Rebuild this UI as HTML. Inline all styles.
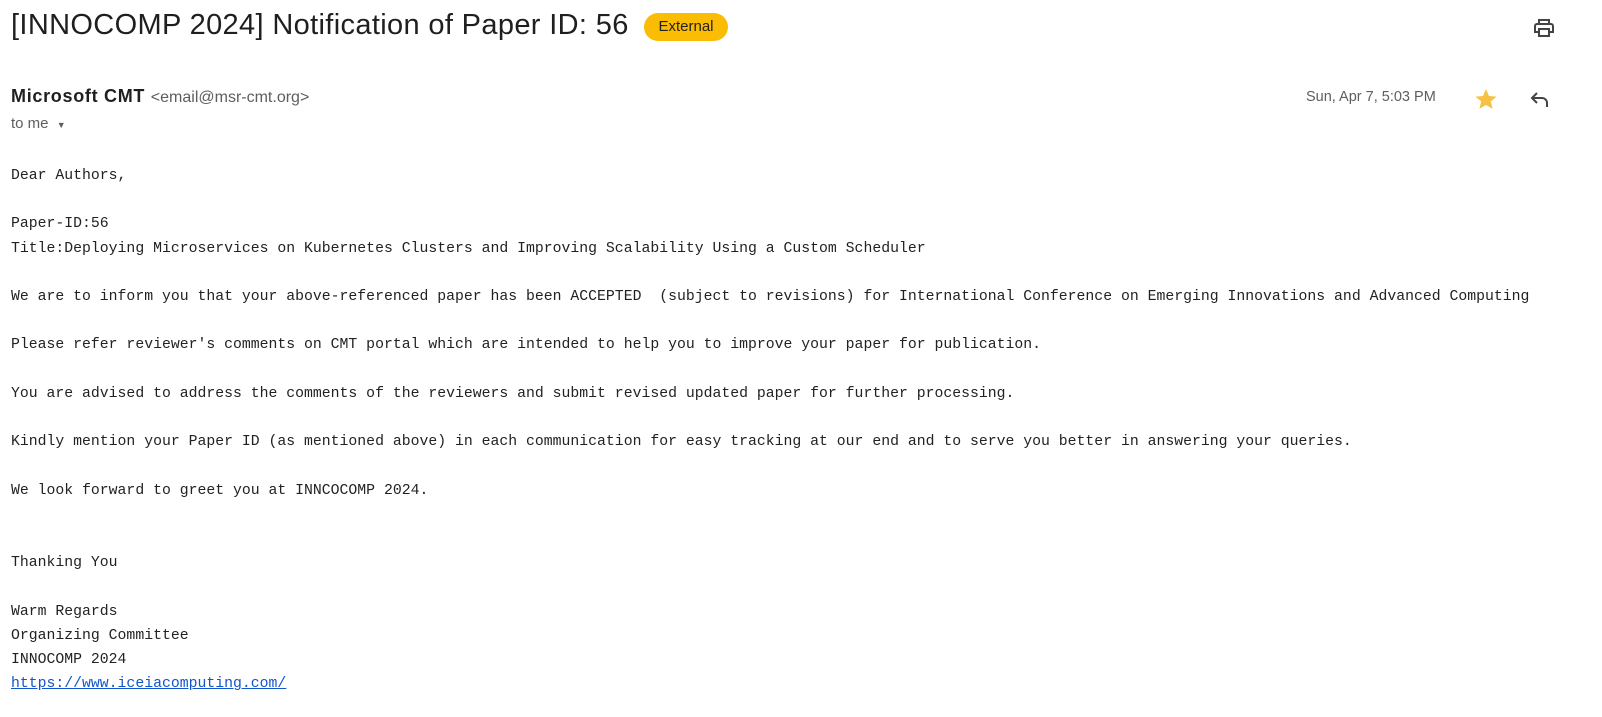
<!DOCTYPE html>
<html><head><style>
body{margin:0;background:#fff;width:1602px;height:717px;overflow:hidden;position:relative;font-family:"Liberation Sans",sans-serif;color:#1f1f1f}
.t{position:absolute;left:11px;top:9px;font-size:29px;white-space:nowrap;letter-spacing:0.35px}
.badge{position:absolute;left:644px;top:13px;width:84px;height:28px;border-radius:14px;background:#fbbc04;font-size:15px;line-height:28px;text-align:center;color:#222}
.from{position:absolute;left:11px;top:86px;font-size:18px;font-weight:bold;white-space:nowrap;letter-spacing:0.7px}
.from span{font-weight:normal;font-size:16px;color:#5e5e5e;letter-spacing:0}
.to{position:absolute;left:11px;top:115px;font-size:15px;color:#5e5e5e}
.date{position:absolute;left:1306px;top:89px;font-size:14.5px;color:#5e5e5e}
pre{position:absolute;left:11px;top:164px;margin:0;font-family:"Liberation Mono",monospace;font-size:14.8px;line-height:24.2px;color:#222}
a{color:#1155cc;text-decoration:underline}
</style></head><body>
<div class="t">[INNOCOMP 2024] Notification of Paper ID: 56</div>
<div class="badge">External</div>
<svg style="position:absolute;left:1532px;top:16px" width="24" height="24" viewBox="0 0 24 24"><path d="M7 8V4h10v4M5 8h14a2 2 0 0 1 2 2v6h-4M7 16H3v-6a2 2 0 0 1 2-2M7 13h10v7H7z" fill="none" stroke="#444" stroke-width="2"/></svg>
<div class="from">Microsoft CMT <span>&lt;email@msr-cmt.org&gt;</span></div>
<div class="to">to me <span style="font-size:9px;margin-left:4px">▼</span></div>
<div class="date">Sun, Apr 7, 5:03 PM</div>
<svg style="position:absolute;left:1474px;top:87px" width="24" height="24" viewBox="0 0 24 24"><path d="M12 2l3 7 7.5.6-5.7 4.9 1.8 7.3L12 18l-6.6 3.8 1.8-7.3L1.5 9.6 9 9z" fill="#f6c244"/></svg>
<svg style="position:absolute;left:1528px;top:87px" width="24" height="24" viewBox="0 0 24 24"><path d="M9 6L4 11l5 5M4 11h10a5 5 0 0 1 5 5v4" fill="none" stroke="#444" stroke-width="2"/></svg>
<pre>Dear Authors,

Paper-ID:56
Title:Deploying Microservices on Kubernetes Clusters and Improving Scalability Using a Custom Scheduler

We are to inform you that your above-referenced paper has been ACCEPTED  (subject to revisions) for International Conference on Emerging Innovations and Advanced Computing

Please refer reviewer's comments on CMT portal which are intended to help you to improve your paper for publication.

You are advised to address the comments of the reviewers and submit revised updated paper for further processing.

Kindly mention your Paper ID (as mentioned above) in each communication for easy tracking at our end and to serve you better in answering your queries.

We look forward to greet you at INNCOCOMP 2024.


Thanking You

Warm Regards
Organizing Committee
INNOCOMP 2024
<a>https://www.iceiacomputing.com/</a></pre>
</body></html>
